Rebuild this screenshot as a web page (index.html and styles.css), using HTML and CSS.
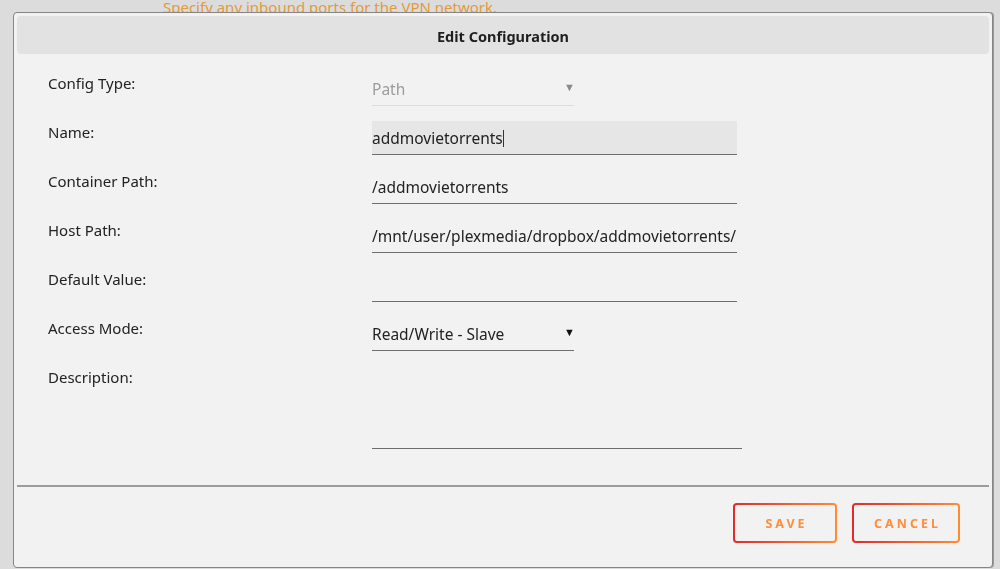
FILE: index.html
```html
<!DOCTYPE html>
<html lang="en">
<head>
  <meta charset="UTF-8" />
  <title>Edit Configuration</title>
  <link rel="stylesheet" href="styles.css">
</head>
<body>
  <p class="hint">Specify any inbound ports for the VPN network.</p>

  <div class="dialog">
    <div class="dialog-title">Edit Configuration</div>

    <div class="form">
      <label class="row-label">Config Type:</label>
      <div class="field select disabled">
        <span>Path</span>
        <span class="arrow">&#9660;</span>
      </div>

      <label class="row-label">Name:</label>
      <div class="field text focused">addmovietorrents<span class="caret"></span></div>

      <label class="row-label">Container Path:</label>
      <div class="field text">/addmovietorrents</div>

      <label class="row-label">Host Path:</label>
      <div class="field text">/mnt/user/plexmedia/dropbox/addmovietorrents/</div>

      <label class="row-label">Default Value:</label>
      <div class="field text"></div>

      <label class="row-label">Access Mode:</label>
      <div class="field select">
        <span>Read/Write - Slave</span>
        <span class="arrow">&#9660;</span>
      </div>

      <label class="row-label">Description:</label>
      <div class="field area"></div>
    </div>

    <div class="divider"></div>

    <div class="actions">
      <button class="btn">SAVE</button>
      <button class="btn">CANCEL</button>
    </div>
  </div>
</body>
</html>
```

FILE: styles.css
```css
html, body {
  height: 100%;
  margin: 0;
  padding: 0;
}

body {
  background-color: #dcdcdc;
  font-family: "Noto Sans", "Open Sans", sans-serif;
  color: #222;
  font-size: 15px;
  overflow: hidden;
}

.hint {
  margin: -2px 0 0 163px;
  color: #e49a38;
  font-size: 15px;
  line-height: 18px;
}

.dialog {
  position: fixed;
  left: 13px;
  top: 12px;
  width: 980px;
  height: 556px;
  background-color: #f2f2f2;
  border: 1px solid #858585;
  border-radius: 4px;
  box-shadow: 1px 0 0 #9a9a9a;
  padding: 3px;
  box-sizing: border-box;
  display: flex;
  flex-direction: column;
}

.dialog-title {
  height: 36px;
  padding-top: 2px;
  line-height: 36px;
  background-color: #e2e2e2;
  border-radius: 4px;
  text-align: center;
  font-weight: bold;
  font-size: 14.5px;
  color: #1e1e1e;
}

.form {
  display: grid;
  grid-template-columns: 324px 1fr;
  grid-auto-rows: 49px;
  margin-top: 18px;
  padding-left: 31px;
}

.row-label {
  line-height: 22px;
  color: #222;
}

.field {
  height: 34px;
  box-sizing: border-box;
  border-bottom: 1px solid #6e6e6e;
  line-height: 34px;
  font-size: 15.5px;
  color: #222;
  white-space: nowrap;
}

.text {
  width: 365px;
}

.focused {
  background-color: #e6e6e6;
}

.caret {
  display: inline-block;
  width: 1px;
  height: 17px;
  background-color: #333;
  vertical-align: -3px;
}

.select {
  width: 202px;
  display: flex;
  justify-content: space-between;
  align-items: center;
}

.select .arrow {
  font-size: 11px;
  margin-right: -1px;
  margin-top: -4px;
  color: #111;
}

.disabled {
  border-bottom-color: #dcdcdc;
  color: #9c9c9c;
}

.disabled .arrow {
  color: #8a8a8a;
}

.form .area {
  width: 370px;
  height: 83px;
  grid-row: span 2;
}

.form .row-label:nth-last-child(2) {
  grid-row: span 2;
}

.divider {
  margin-top: 21px;
  height: 2px;
  background-color: #9c9c9c;
}

.actions {
  display: flex;
  justify-content: flex-end;
  gap: 15px;
  padding: 16px 29px 0 0;
}

.btn {
  height: 40px;
  padding: 0;
  font-family: "Noto Sans", sans-serif;
  font-size: 12.5px;
  font-weight: bold;
  letter-spacing: 3px;
  text-indent: 3px;
  color: #ff8d3a;
  border: 2px solid transparent;
  border-radius: 4px;
  background: linear-gradient(#f2f2f2, #f2f2f2) padding-box,
              linear-gradient(90deg, #e22a2a, #ff8d33) border-box;
  cursor: pointer;
}

.btn:first-child {
  width: 104px;
}

.btn:last-child {
  width: 108px;
}
```
